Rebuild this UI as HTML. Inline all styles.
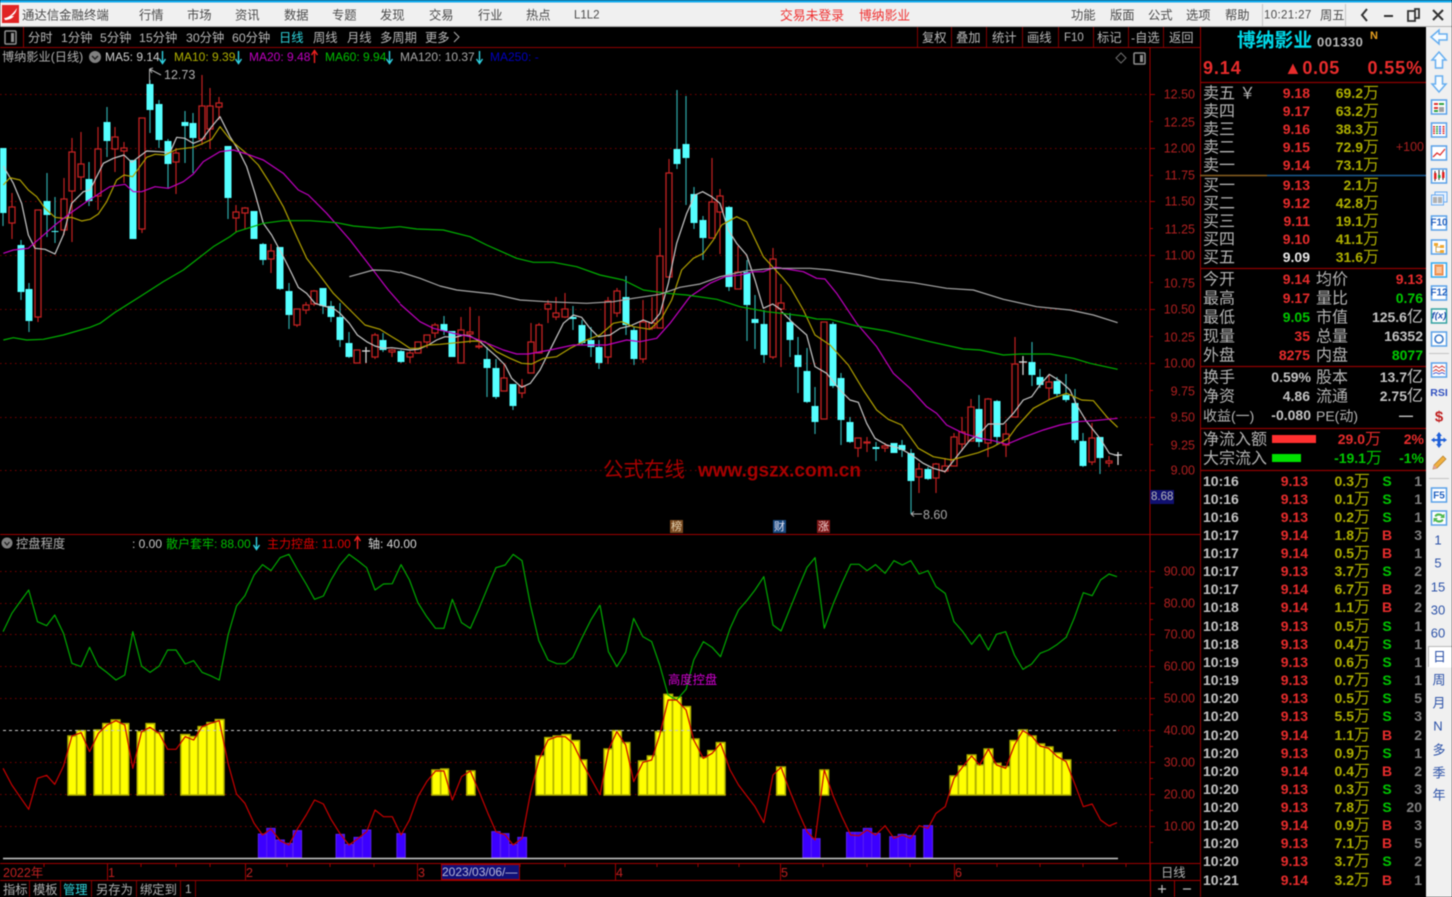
<!DOCTYPE html>
<html lang="zh">
<head>
<meta charset="utf-8">
<title>通达信金融终端</title>
<style>
html,body{margin:0;padding:0;background:#000;width:1452px;height:897px;overflow:hidden}
svg{display:block;filter:blur(.45px)}
text{font-family:"Liberation Sans","Noto Sans CJK SC",sans-serif;dominant-baseline:central;white-space:pre}
.m{font-size:12.3px;fill:#4a4a4a;transform:translateY(.6px)}
.tb{font-size:12.3px;fill:#b8b8b8;transform:translateY(1px)}
.ax{font-size:12.5px;fill:#b02020;text-anchor:end;transform:translateY(.6px)}
.lb{font-size:16px;fill:#b4b4b4;transform:translateY(1px)}
.n{font-size:14px;font-weight:700}
.r{fill:#e82c2c}.g{fill:#00c800}.y{fill:#b0b000}.w{fill:#c4c4c4}
.e{text-anchor:end}
.s{font-size:13px;fill:#2c52a8;text-anchor:middle}
.ma{fill:none;stroke-width:1.2;vector-effect:non-scaling-stroke;stroke-linejoin:round}
polyline,path.ns{vector-effect:non-scaling-stroke}
</style>
</head>
<body>
<svg width="1452" height="897" viewBox="0 0 1452 897" xmlns="http://www.w3.org/2000/svg">
<rect width="1452" height="897" fill="#000"/>

<!-- title bar -->
<rect width="1452" height="27" fill="#f0f0f0"/>
<rect width="1452" height="2.5" fill="#12a8ea"/>
<rect y="26" width="1452" height="1" fill="#b0b0b0"/>
<rect x="2" y="5" width="17" height="18" fill="#e02424"/>
<path d="M4 18C8 18 12 15 17 8C16 13 14 15 11 16L14 16C12 19 8 20 5 20Z" fill="#fff"/>
<text class="m" x="22" y="15" style="font-size:12.4px">通达信金融终端</text>
<text class="m" x="139" y="15">行情</text><text class="m" x="187" y="15">市场</text><text class="m" x="235" y="15">资讯</text><text class="m" x="284" y="15">数据</text><text class="m" x="332" y="15">专题</text><text class="m" x="380" y="15">发现</text><text class="m" x="429" y="15">交易</text><text class="m" x="478" y="15">行业</text><text class="m" x="526" y="15">热点</text><text class="m" x="574" y="15" style="font-size:11.5px">L1L2</text>
<text class="m" x="780" y="15" style="fill:#f03030;font-size:12.8px">交易未登录</text><text class="m" x="859" y="15" style="fill:#f03030;font-size:12.8px">博纳影业</text>
<text class="m" x="1071" y="15">功能</text><text class="m" x="1110" y="15">版面</text><text class="m" x="1148" y="15">公式</text><text class="m" x="1186" y="15">选项</text><text class="m" x="1225" y="15">帮助</text>
<path d="M1262.5 4V26M1345.5 4V26" stroke="#c4c4c4"/>
<text class="m" x="1264" y="15" style="font-size:11.5px;letter-spacing:.35px">10:21:27</text><text class="m" x="1320" y="15">周五</text>
<path d="M1367 9L1362 15L1367 21" fill="none" stroke="#333" stroke-width="2"/>
<path d="M1384 16H1393" stroke="#333" stroke-width="2"/>
<path d="M1408 11H1415V9H1419V18H1415M1408 11H1415V21H1408Z" fill="none" stroke="#333" stroke-width="1.8"/>
<path d="M1433 10L1443 20M1443 10L1433 20" stroke="#333" stroke-width="2"/>

<!-- toolbar -->
<rect x="5" y="31" width="11" height="13" rx="1" fill="none" stroke="#909090" stroke-width="1.5"/>
<rect x="11" y="33" width="3" height="9" fill="#909090"/>
<path d="M23.5 27V47" stroke="#900000"/>
<text class="tb" x="28" y="37">分时</text><text class="tb" x="61" y="37">1分钟</text><text class="tb" x="100" y="37">5分钟</text><text class="tb" x="139" y="37">15分钟</text><text class="tb" x="186" y="37">30分钟</text><text class="tb" x="232" y="37">60分钟</text><text class="tb" x="279" y="37" style="fill:#30d8e0">日线</text><text class="tb" x="313" y="37">周线</text><text class="tb" x="347" y="37">月线</text><text class="tb" x="380" y="37">多周期</text><text class="tb" x="425" y="37">更多</text>
<path d="M454 32L459 37L454 42" fill="none" stroke="#b0b0b0"/>
<path d="M917.5 27V47M951.5 27V47M986.5 27V47M1022.5 27V47M1058.5 27V47M1093.5 27V47M1128.5 27V47M1163.5 27V47" stroke="#800000"/>
<text class="tb" x="922" y="37">复权</text><text class="tb" x="956" y="37">叠加</text><text class="tb" x="992" y="37">统计</text><text class="tb" x="1027" y="37">画线</text><text class="tb" x="1064" y="37" style="font-size:11.5px">F10</text><text class="tb" x="1097" y="37">标记</text><text class="tb" x="1131" y="37">-自选</text><text class="tb" x="1169" y="37">返回</text>
<path d="M0 47.5H1200" stroke="#900000"/>

<!-- frame lines -->
<path d="M1150 47V880M0 534.5H1200M0 863.5H1200M0 880.5H1200M1200.5 27V897" stroke="#a00000" fill="none"/>

<!-- chart legend -->
<text x="2" y="57" style="font-size:12.2px;fill:#b0b0b0">博纳影业(日线)</text>
<circle cx="95" cy="57" r="6" fill="#808080"/><path d="M92 56L95 59L98 56" fill="none" stroke="#222" stroke-width="1.5"/>
<text x="105" y="57" style="font-size:12px;fill:#d0d0d0">MA5: 9.14</text>
<text x="174" y="57" style="font-size:12px;fill:#b0b000">MA10: 9.39</text>
<text x="249" y="57" style="font-size:12px;fill:#c000c0">MA20: 9.48</text>
<text x="325" y="57" style="font-size:12px;fill:#00c000">MA60: 9.94</text>
<text x="400" y="57" style="font-size:12px;fill:#a8a8a8">MA120: 10.37</text>
<text x="490" y="57" style="font-size:12px;fill:#0000c0">MA250: -</text>
<path d="M162.5 51V63M159.5 59L162.5 63.500L165.500 59M238.500 51V63M235.500 59L238.500 63.500L241.500 59M389.500 51V63M386.500 59L389.500 63.500L392.500 59M479.500 51V63M476.500 59L479.500 63.500L482.500 59" stroke="#30d0e0" stroke-width="1.400" fill="none"/>
<path d="M314.500 63V51M311.500 55L314.500 50.500L317.500 55" stroke="#f02020" stroke-width="1.400" fill="none"/>
<path d="M1121 53L1126 58L1121 63L1116 58Z" fill="none" stroke="#707070"/>
<rect x="1134" y="53" width="11" height="11" rx="1" fill="none" stroke="#909090" stroke-width="1.500"/><rect x="1140" y="55" width="3" height="7" fill="#909090"/>

<!-- upper grid -->
<path d="M0 94.500H1150M0 148.500H1150M0 201.500H1150M0 255.500H1150M0 309.500H1150M0 363.500H1150M0 417.500H1150M0 470.500H1150" stroke="#7a0000" stroke-dasharray="1.500 3.500"/>

<!-- axis ticks -->
<path d="M1150 94.500h5M1150 148.500h5M1150 201.500h5M1150 255.500h5M1150 309.500h5M1150 363.500h5M1150 417.500h5M1150 470.500h5M1150 121.500h3M1150 175.500h3M1150 228.500h3M1150 282.500h3M1150 336.500h3M1150 390.500h3M1150 444.500h3M1150 571.500h5M1150 603.500h5M1150 634.500h5M1150 666.500h5M1150 698.500h5M1150 730.500h5M1150 762.500h5M1150 794.500h5M1150 826.500h5M1150 587.500h3M1150 619.500h3M1150 650.500h3M1150 682.500h3M1150 714.500h3M1150 746.500h3M1150 778.500h3M1150 810.500h3M1150 842.500h3" stroke="#a00000"/>
<text class="ax" x="1195" y="94">12.50</text><text class="ax" x="1195" y="122">12.25</text><text class="ax" x="1195" y="148">12.00</text><text class="ax" x="1195" y="175">11.75</text><text class="ax" x="1195" y="201">11.50</text><text class="ax" x="1195" y="229">11.25</text><text class="ax" x="1195" y="255">11.00</text><text class="ax" x="1195" y="283">10.75</text><text class="ax" x="1195" y="309">10.50</text><text class="ax" x="1195" y="337">10.25</text><text class="ax" x="1195" y="363">10.00</text><text class="ax" x="1195" y="391">9.75</text><text class="ax" x="1195" y="417">9.50</text><text class="ax" x="1195" y="445">9.25</text><text class="ax" x="1195" y="470">9.00</text>
<rect x="1150" y="490" width="24" height="14" fill="#101070"/><text x="1151" y="497" style="font-size:11.500px;fill:#b8b8b8">8.68</text>
<text class="ax" x="1195" y="571">90.00</text><text class="ax" x="1195" y="603">80.00</text><text class="ax" x="1195" y="634">70.00</text><text class="ax" x="1195" y="666">60.00</text><text class="ax" x="1195" y="698">50.00</text><text class="ax" x="1195" y="730">40.00</text><text class="ax" x="1195" y="762">30.00</text><text class="ax" x="1195" y="794">20.00</text><text class="ax" x="1195" y="826">10.00</text>

<!-- watermark -->
<text x="603" y="470" style="font-size:20.500px;fill:#a80000">公式在线</text>
<text x="698" y="471" style="font-size:19px;font-weight:700;fill:#a80000">www.gszx.com.cn</text>

<!-- cyan wicks -->
<path stroke="#2fa8a8" stroke-width="1.200" fill="none" d="M3 148V226M21 240V300M29 283V332M47 173V237M55 197V243M89 162V206M107 107V157M150 80V133M159 100V148M168 139V188M185 111V163M193 113V173M228 146V219M263 243V265M280 247V290M289 283V329M323 288V314M331 301V322M340 303V347M349 332V358M383 333V352M401 350V363M444 316V335M487 347V397M496 359V399M513 384V410M573 306V330M582 320V345M591 327V357M599 340V369M626 276V335M634 327V365M677 90V169M686 96V205M694 187V229M703 216V260M729 206V291M747 260V341M755 295V349M764 310V363M790 313V357M798 337V393M807 348V403M815 387V434M833 322V388M841 373V445M850 417V443M876 442V461M902 440V457M911 449V514M928 467V480M979 395V447M997 400V445M1032 342V386M1040 369V388M1057 377V397M1066 374V402M1075 389V443M1083 433V467M1100 437V474"/>
<!-- cyan bodies -->
<path fill="#55ffff" d="M-.5 148H6.500V213H-.5ZM17.500 245H24.500V292H17.500ZM25.500 289H32.500V321H25.500ZM43.500 201H50.500V215H43.500ZM51.500 231H58.500V232H51.500ZM85.500 179H92.500V201H85.500ZM103.500 122H110.500V141H103.500ZM129.500 160H136.500V239H129.500ZM146.500 84H153.500V110H146.500ZM155.500 104H162.500V140H155.500ZM164.500 141H171.500V164H164.500ZM181.500 122H188.500V126H181.500ZM189.500 123H196.500V138H189.500ZM224.500 146H231.500V198H224.500ZM250.500 211H257.500V239H250.500ZM259.500 244H266.500V260H259.500ZM276.500 247H283.500V289H276.500ZM285.500 291H292.500V315H285.500ZM319.500 288H326.500V306H319.500ZM327.500 306H334.500V317H327.500ZM336.500 317H343.500V340H336.500ZM345.500 343H352.500V357H345.500ZM379.500 340H386.500V350H379.500ZM397.500 351H404.500V362H397.500ZM440.500 324H447.500V331H440.500ZM448.500 331H455.500V357H448.500ZM483.500 359H490.500V368H483.500ZM492.500 368H499.500V397H492.500ZM509.500 384H516.500V406H509.500ZM569.500 317H576.500V319H569.500ZM578.500 325H585.500V343H578.500ZM587.500 340H594.500V347H587.500ZM595.500 347H602.500V363H595.500ZM622.500 297H629.500V325H622.500ZM630.500 330H637.500V359H630.500ZM673.500 149H680.500V164H673.500ZM682.500 144H689.500V158H682.500ZM690.500 194H697.500V223H690.500ZM699.500 220H706.500V238H699.500ZM725.500 207H732.500V287H725.500ZM743.500 272H750.500V305H743.500ZM751.500 319H758.500V323H751.500ZM760.500 324H767.500V355H760.500ZM786.500 322H793.500V340H786.500ZM794.500 355H801.500V367H794.500ZM803.500 371H810.500V402H803.500ZM811.500 406H818.500V422H811.500ZM829.500 324H836.500V386H829.500ZM837.500 378H844.500V420H837.500ZM846.500 422H853.500V442H846.500ZM872.500 447H879.500V449H872.500ZM890.500 443H897.500V453H890.500ZM898.500 445H905.500V450H898.500ZM907.500 453H914.500V481H907.500ZM924.500 469H931.500V479H924.500ZM975.500 409H982.500V442H975.500ZM993.500 401H1000.500V437H993.500ZM1028.500 362H1035.500V375H1028.500ZM1036.500 377H1043.500V385H1036.500ZM1053.500 381H1060.500V394H1053.500ZM1062.500 395H1069.500V400H1062.500ZM1071.500 403H1078.500V440H1071.500ZM1079.500 441H1086.500V466H1079.500ZM1096.500 437H1103.500V458H1096.500Z"/>
<!-- red wicks -->
<path stroke="#c02020" stroke-width="1.200" fill="none" d="M12 193V239M38 210V322M64 178V235M72 138V242M81 132V190M98 127V210M115 127V172M124 142V183M142 118V233M176 148V194M202 75V145M210 88V149M219 97V120M236 205V232M245 207V229M271 244V273M297 309V327M306 302V314M314 290V306M357 350V363M375 333V359M392 349V357M410 351V363M418 342V353M427 335V348M435 323V338M461 317V363M470 307V343M479 316V349M504 363V391M522 379V398M531 323V373M539 323V353M548 300V323M556 297V320M565 293V318M608 297V364M617 288V317M643 300V363M652 297V330M660 228V328M669 159V277M712 158V238M720 189V254M738 246V289M773 248V359M781 284V367M824 322V419M858 438V457M867 437V452M885 443V452M919 463V493M936 463V493M945 458V473M954 433V466M962 417V451M971 399V441M988 398V457M1006 423V457M1015 337V417M1049 375V400M1092 423V465M1109 456V467"/>
<!-- red bodies -->
<path fill="#000" stroke="#c42222" stroke-width="1.300" d="M9 207H15V223H9ZM35 210H41V317H35ZM61 199H67V230H61ZM69 152H75V191H69ZM78 164H84V177H78ZM95 149H101V196H95ZM112 137H118V149H112ZM121 148H127V151H121ZM139 118H145V229H139ZM173 153H179V162H173ZM199 106H205V139H199ZM207 106H213V129H207ZM216 103H222V107H216ZM233 212H239V218H233ZM242 208H248V213H242ZM268 251H274V259H268ZM294 309H300V325H294ZM303 305H309V310H303ZM311 291H317V304H311ZM354 350H360V363H354ZM372 335H378V357H372ZM389 350H395V352H389ZM407 353H413V357H407ZM415 342H421V353H415ZM424 335H430V342H424ZM432 325H438V333H432ZM458 330H464V363H458ZM467 332H473V334H467ZM476 346H482V347H476ZM501 378H507V391H501ZM519 386H525V393H519ZM528 342H534V373H528ZM536 325H542V353H536ZM545 304H551V309H545ZM553 313H559V317H553ZM562 309H568V317H562ZM605 301H611V357H605ZM614 291H620V313H614ZM640 322H646V359H640ZM649 323H655V328H649ZM657 256H663V328H657ZM666 173H672V277H666ZM709 202H715V238H709ZM717 196H723V212H717ZM735 272H741V289H735ZM770 259H776V357H770ZM778 303H784V309H778ZM821 322H827V419H821ZM855 438H861V448H855ZM864 442H870V443H864ZM882 446H888V448H882ZM916 469H922V477H916ZM933 464H939V478H933ZM942 466H948V471H942ZM951 437H957V466H951ZM959 432H965V444H959ZM968 407H974V441H968ZM985 399H991V443H985ZM1003 434H1009V445H1003ZM1012 364H1018V417H1012ZM1046 382H1052V388H1046ZM1089 438H1095V462H1089ZM1106 461H1112V463H1106Z"/>
<!-- white dojis -->
<path stroke="#e0e0e0" stroke-width="1.200" fill="none" d="M366 347V363M362 351H370M1023 356V375M1019 362H1027M1118 452V465M1114 455H1122"/>

<!-- high / low marks -->
<path d="M149.500 84V69M149.500 69L161 75M149.500 69L153 68M149.500 69L152 73" stroke="#b0b0b0" fill="none"/>
<text x="164" y="75" style="font-size:12.500px;fill:#b0b0b0">12.73</text>
<path d="M911 514H922M911 514L914 511.500M911 514L914 516.500" stroke="#b0b0b0" fill="none"/>
<text x="923" y="515" style="font-size:12.500px;fill:#a8a8a8">8.60</text>

<!-- MA lines -->
<g transform="translate(0,80) scale(.33333)">
<polyline class="ma" stroke="#c8c8c8" points="10,258 40,310 65,370 85,465 105,505 135,508 165,522 190,465 215,370 250,335 270,330 310,250 340,235 372,225 395,247 440,213 480,215 510,218 530,172 555,175 580,190 605,180 635,140 660,110 690,170 715,210 740,260 765,340 790,430 815,465 850,530 875,580 895,622 920,640 945,670 970,678 1000,685 1020,700 1048,730 1072,765 1100,785 1125,798 1150,805 1175,803 1200,806"/>
<polyline class="ma" stroke="#b0a000" points="10,315 30,293 60,300 85,330 110,350 135,385 165,412 190,415 215,412 245,423 270,418 295,402 320,365 350,300 372,285 398,290 440,232 465,223 495,225 530,208 580,202 605,192 635,178 660,140 690,178 715,200 745,225 775,255 810,310 850,380 890,470 920,535 955,580 1000,640 1050,690 1095,735 1140,748 1175,770 1200,785"/>
<polyline class="ma" stroke="#c000c0" points="10,520 40,510 85,505 125,470 165,435 210,400 260,365 330,320 375,313 400,335 425,335 465,320 505,325 550,305 580,282 610,245 660,215 700,210 740,222 790,240 850,280 895,330 925,345 980,400 1050,480 1100,545 1165,630 1200,670"/>
<polyline class="ma" stroke="#00b000" points="10,780 40,773 80,780 130,778 190,765 270,742 300,730 345,697 420,650 490,605 550,570 640,500 690,470 710,455 790,430 850,422 930,422 1010,428 1060,438 1140,445 1200,440"/>
<polyline class="ma" stroke="#a8a8a8" points="1048,590 1120,570 1170,572 1200,578"/>
</g>
<g transform="translate(400,80) scale(.33333)">
<polyline class="ma" stroke="#c8c8c8" points="0,806 30,810 55,808 85,795 110,780 135,770 165,772 190,765 210,768 240,785 265,808 290,830 315,855 335,895 365,922 391,910 420,870 460,790 490,730 520,705 545,712 570,745 595,770 630,765 660,745 690,738 730,720 755,730 780,700 805,610 830,490 860,400 885,345 908,335 935,350 960,370 985,450 1010,490 1040,525 1065,600 1090,685 1118,672 1145,690"/>
<polyline class="ma" stroke="#b0a000" points="0,785 30,805 55,805 85,795 120,793 170,788 220,783 255,785 290,815 330,835 365,850 395,852 430,835 470,830 510,805 560,780 600,765 640,730 665,725 700,740 750,748 785,715 815,660 845,570 880,535 910,520 940,480 965,435 1010,410 1040,425 1090,530 1145,590"/>
<polyline class="ma" stroke="#c000c0" points="0,672 60,725 100,745 160,760 210,770 250,785 310,810 350,822 385,822 450,810 520,795 570,795 620,795 680,780 720,785 770,775 810,730 870,650 930,610 975,590 1020,585 1060,575 1090,575 1125,562 1145,564"/>
<polyline class="ma" stroke="#00b000" points="0,440 50,447 130,450 210,470 260,495 350,535 400,547 460,547 530,560 600,585 670,600 730,630 800,640 860,645 950,658 1020,680 1100,695 1145,700"/>
<polyline class="ma" stroke="#a8a8a8" points="0,576 60,595 120,618 170,630 280,642 360,660 440,665 560,670 640,665 700,655 780,643 840,622 900,612 960,590 1040,572 1120,565 1145,565"/>
</g>
<g transform="translate(760,200) scale(.33333)">
<polyline class="ma" stroke="#c8c8c8" points="65,335 100,370 140,405 165,500 200,520 240,570 270,600 295,607 320,670 345,715 380,735 420,745 455,765 490,790 520,805 555,815 590,770 630,720 660,700 685,672 730,672 760,640 790,600 815,590 840,555 868,523 900,543 930,570 950,615 980,665 1020,715 1048,760 1073,767"/>
<polyline class="ma" stroke="#b0a000" points="65,230 90,260 130,330 165,405 210,435 265,495 310,570 350,630 385,658 425,675 475,745 520,770 575,780 610,770 655,758 700,740 745,715 770,680 820,625 870,598 920,580 965,600 1000,602 1040,650 1073,682"/>
<polyline class="ma" stroke="#c000c0" points="65,206 80,207 130,215 170,235 195,237 230,280 290,370 350,440 400,520 450,565 500,620 530,640 560,675 610,700 660,715 700,722 740,733 790,712 850,690 900,675 950,665 1000,662 1073,655"/>
<polyline class="ma" stroke="#00b000" points="65,340 130,348 170,357 210,358 290,378 380,393 510,425 610,447 660,450 730,465 780,462 870,462 940,475 990,490 1073,508"/>
<polyline class="ma" stroke="#a8a8a8" points="65,205 150,205 210,210 300,225 360,238 460,248 560,265 640,270 730,298 830,320 930,330 1000,345 1073,368"/>
</g>

<!-- event markers -->
<rect x="670" y="520" width="13" height="13" fill="#7a4a20"/><text x="676.500" y="527" text-anchor="middle" style="font-size:11px;fill:#e0d0b0">榜</text>
<rect x="773" y="520" width="13" height="13" fill="#1a4a80"/><text x="779.500" y="527" text-anchor="middle" style="font-size:11px;fill:#e0e0f0">财</text>
<rect x="817" y="520" width="13" height="13" fill="#801818"/><text x="823.500" y="527" text-anchor="middle" style="font-size:11px;fill:#f0d0d0">涨</text>

<!-- lower legend -->
<circle cx="7" cy="543" r="5.500" fill="#808080"/><path d="M4.500 542L7 545L9.500 542" fill="none" stroke="#222" stroke-width="1.300"/>
<text x="16" y="544" style="font-size:12.300px;fill:#b0b0b0">控盘程度</text>
<text x="132" y="544" style="font-size:12px;fill:#c8c8c8">: 0.00</text>
<text x="166" y="544" style="font-size:12px;fill:#00c000">散户套牢: 88.00</text>
<path d="M256.500 537V549M253.500 545L256.500 549.500L259.500 545" stroke="#30d0e0" stroke-width="1.400" fill="none"/>
<text x="267" y="544" style="font-size:12px;fill:#e00000">主力控盘: 11.00</text>
<path d="M357.500 549V537M354.500 541L357.500 536.500L360.500 541" stroke="#f02020" stroke-width="1.400" fill="none"/>
<text x="368" y="544" style="font-size:12px;fill:#d8d8d8">轴: 40.00</text>

<!-- lower grid -->
<path d="M0 571.500H1150M0 603.500H1150M0 634.500H1150M0 666.500H1150M0 698.500H1150M0 762.500H1150M0 794.500H1150M0 826.500H1150" stroke="#7a0000" stroke-dasharray="1.500 3.500"/>
<path d="M1118 730.500H1150" stroke="#7a0000" stroke-dasharray="1.500 3.500"/>

<!-- bars -->
<g transform="translate(0,530) scale(.38270,.33333)">
<path class="ns" fill="#ffff00" stroke="#b0b000" stroke-width="1.500" d="M177.700 795V618H200.300V795ZM200.300 795V602H222.900V795ZM245.700 795V600H268.300V795ZM268.700 795V581H291.300V795ZM290.700 795V570H313.300V795ZM313.700 795V581H336.300V795ZM358.700 795V605H381.300V795ZM381.700 795V581H404.300V795ZM404.700 795V608H427.300V795ZM472.700 795V614H495.300V795ZM494.700 795V620H517.300V795ZM517.700 795V590H540.300V795ZM540.700 795V578H563.300V795ZM562.700 795V569H585.300V795ZM1128.700 795V720H1151.300V795ZM1151.700 795V717H1172V795ZM1219.700 795V723H1241V795ZM1400.700 795V678H1423.300V795ZM1423.700 795V623H1446.300V795ZM1445.700 795V618H1468.300V795ZM1468.700 795V614H1491.300V795ZM1491.700 795V632H1514.300V795ZM1514.700 795V690H1533V795Z"/>
<path class="ns" fill="#3c00ff" stroke="#5a20f0" stroke-width="1" d="M675 983V912H697V983ZM697 983V895H719V983ZM721 983V930H743V983ZM743 983V940H765V983ZM766 983V902H788V983ZM878 983V913H900V983ZM901 983V943H923V983ZM925 983V922H947V983ZM947 983V900H969V983ZM1037 983V911H1059V983ZM1285 983V905H1307V983ZM1308 983V911H1330V983ZM1330 983V943H1352V983ZM1353 983V922H1376V983Z"/>
</g>
<g transform="translate(600,530) scale(.38270,.33333)">
<path class="ns" fill="#ffff00" stroke="#b0b000" stroke-width="1.500" d="M10.700 795V657H33.300V795ZM33 795V602H55.600V795ZM55.700 795V638H78V795ZM100.700 795V693H123.300V795ZM123.700 795V678H146.300V795ZM145 795V605H167.600V795ZM167 795V493H189.600V795ZM189 795V502H212V795ZM213.700 795V530H236.300V795ZM236 795V627H258.600V795ZM258.700 795V682H281.300V795ZM281.700 795V662H304.300V795ZM304 795V638H326.600V795ZM461.700 795V711H484.300V795ZM574.700 795V720H597.300V795ZM914.700 795V738H936.300V795ZM936.700 795V708H959.300V795ZM959.700 795V675H982.300V795ZM981 795V705H1003.600V795ZM1003.700 795V657H1026.300V795ZM1025 795V700H1047.600V795ZM1048.700 795V710H1071.300V795ZM1071.700 795V632H1094.300V795ZM1094 795V600H1116.600V795ZM1116.700 795V618H1139.300V795ZM1139 795V642H1161.600V795ZM1161 795V651H1183.600V795ZM1184 795V669H1206.600V795ZM1207 795V690H1230V795Z"/>
<path class="ns" fill="#3c00ff" stroke="#5a20f0" stroke-width="1" d="M530 983V898H552V983ZM552 983V926H575V983ZM644 983V907H666V983ZM666 983V907H688V983ZM688 983V895H710V983ZM710 983V910H732V983ZM757 983V920H779V983ZM779 983V913H801V983ZM801 983V917H824V983ZM846 983V887H869V983Z"/>
</g>

<!-- white lines -->
<path d="M3 730.500H1118" stroke="#c8c8c8" stroke-dasharray="3 3"/>
<path d="M3 858.500H1118" stroke="#c8c8c8" stroke-width="1.500"/>

<!-- indicator lines -->
<g transform="translate(0,530) scale(.38270,.33333)">
<polyline class="ma" stroke="#00a800" points="8,305 31,250 52,216 75,180 98,275 122,287 143,255 166,310 188,400 212,410 234,352 257,408 280,428 303,450 326,435 347,305 370,408 392,427 416,408 438,360 460,360 484,402 506,392 528,427 550,437 573,450 596,315 618,228 640,197 664,135 686,104 708,122 732,83 755,73 778,120 800,162 822,208 845,198 865,150 888,105 912,73 936,93 958,113 980,180 1002,162 1025,161 1048,104 1070,150 1092,218 1115,260 1138,295 1160,295 1182,208 1206,278 1229,295 1252,235 1275,170 1296,113 1320,105 1341,73 1364,92 1386,225 1408,332 1432,390 1455,401 1477,401 1497,382 1520,325 1544,270 1568,225"/>
<polyline class="ma" stroke="#c80000" points="8,715 31,765 52,800 75,838 98,745 122,736 143,763 166,708 188,618 212,608 234,665 257,610 280,585 303,572 326,585 347,715 370,605 392,592 416,610 438,658 460,658 484,620 506,630 528,590 550,580 573,572 596,700 618,792 640,820 664,880 686,915 708,897 732,932 755,945 778,895 800,855 822,810 845,822 865,868 888,910 912,945 936,925 958,905 980,840 1002,860 1025,860 1048,915 1070,870 1092,800 1115,755 1138,723 1160,723 1182,810 1206,740 1229,723 1252,785 1275,850 1296,905 1320,915 1341,945 1364,925 1386,790 1408,690 1432,630 1455,620 1477,620 1497,640 1520,695 1544,745 1568,795"/>
</g>
<g transform="translate(600,530) scale(.38270,.33333)">
<polyline class="ma" stroke="#00a800" points="0,225 22,365 44,410 67,367 88,265 112,320 135,335 156,405 178,495 200,510 225,478 245,390 270,335 293,352 315,380 340,295 362,240 385,210 405,180 428,140 452,285 473,303 495,240 518,175 541,112 562,83 586,295 610,220 632,160 655,103 677,103 698,122 720,104 745,130 768,92 790,105 812,92 834,132 857,122 878,170 902,190 925,275 948,305 971,343 992,313 1015,360 1036,313 1060,305 1083,375 1105,418 1128,402 1150,370 1172,360 1195,343 1218,322 1240,262 1263,188 1286,197 1308,150 1330,132 1351,140"/>
<polyline class="ma" stroke="#c80000" points="0,795 22,660 44,605 67,645 88,755 112,697 135,690 156,615 178,510 200,510 225,540 245,630 270,685 293,670 315,640 340,720 362,765 385,800 405,830 428,878 452,735 473,712 495,780 518,845 541,905 562,930 586,720 610,800 632,860 655,915 677,917 698,900 720,915 745,887 768,925 790,915 812,925 834,887 857,895 878,850 902,830 925,745 948,710 971,678 992,705 1015,657 1036,705 1060,715 1083,645 1105,602 1128,618 1150,648 1172,655 1195,680 1218,695 1240,760 1263,830 1286,822 1308,870 1330,888 1351,878"/>
</g>
<text x="668" y="680" style="font-size:12.300px;fill:#d000d0">高度控盘</text>

<!-- date row -->
<path d="M107.500 864V880M245.500 864V880M417.500 864V880M615.500 864V880M780.500 864V880M954.500 864V880M1174.500 880V897M1150.500 864V897" stroke="#a00000"/>
<path d="M44 864v3M141 864v3M176 864v3M210 864v3M287 864v3M330 864v3M374 864v3M520 864v3M565 864v3M657 864v3M698 864v3M739 864v3M823 864v3M867 864v3M910 864v3M997 864v3M1040 864v3M1083 864v3M1126 864v3" stroke="#a00000"/>
<text x="3" y="873" style="font-size:12.500px;fill:#c02020">2022年</text>
<text x="108" y="873" style="font-size:12.500px;fill:#c02020">1</text>
<text x="246" y="873" style="font-size:12.500px;fill:#c02020">2</text>
<text x="418" y="873" style="font-size:12.500px;fill:#c02020">3</text>
<rect x="441.500" y="864.500" width="78" height="15" fill="#101078" stroke="#a00000"/>
<text x="442" y="872" style="font-size:12px;fill:#b8b8d8">2023/03/06/—</text>
<text x="616" y="873" style="font-size:12.500px;fill:#c02020">4</text>
<text x="781" y="873" style="font-size:12.500px;fill:#c02020">5</text>
<text x="955" y="873" style="font-size:12.500px;fill:#c02020">6</text>
<text x="1161" y="873" style="font-size:12.300px;fill:#b0b0b0">日线</text>

<!-- bottom row -->
<path d="M29.500 881V897M60.500 881V897M91.500 881V897M136.500 881V897M180.500 881V897M195.500 881V897" stroke="#800000"/>
<text x="3" y="890" style="font-size:12.300px;fill:#b0b0b0">指标</text>
<text x="33" y="890" style="font-size:12.300px;fill:#b0b0b0">模板</text>
<text x="63" y="890" style="font-size:12.300px;fill:#30d8e0">管理</text>
<text x="96" y="890" style="font-size:12.300px;fill:#b0b0b0">另存为</text>
<text x="140" y="890" style="font-size:12.300px;fill:#b0b0b0">绑定到</text>
<text x="185" y="889" style="font-size:12px;fill:#b0b0b0">1</text>
<path d="M1158 889H1166M1162 885V893M1183 889H1191" stroke="#c0c0c0" stroke-width="1.200"/>

<!-- right panel -->
<path d="M1200 82.500H1426M1200 268.500H1426M1200 366.500H1426M1200 428.500H1426M1200 470.500H1426" stroke="#900000" stroke-width="1.200"/>
<path d="M1200 175.500H1267" stroke="#8a6020" stroke-width="1.400"/><path d="M1267 175.500H1426" stroke="#1a5a90" stroke-width="1.400"/>
<path d="M1200.500 470V897" stroke="#900000"/>
<text x="1237" y="40" style="font-size:18.800px;fill:#00d8e8;font-weight:700">博纳影业</text>
<text x="1317" y="42" style="font-size:13px;fill:#b8b8b8;letter-spacing:.5px;font-weight:700">001330</text>
<text x="1370" y="36" style="font-size:11px;fill:#e8a020;font-weight:700">N</text>
<text class="r" x="1203" y="68" style="font-size:18px;font-weight:700;letter-spacing:.9px">9.14</text>
<text class="r" x="1284" y="68" style="font-size:18px;font-weight:700;letter-spacing:.6px">▲0.05</text>
<text class="r e" x="1423" y="68" style="font-size:18px;font-weight:700;letter-spacing:.9px">0.55%</text>

<text class="lb" x="1203" y="93">卖五 ￥</text><text class="lb" x="1203" y="111">卖四</text><text class="lb" x="1203" y="129">卖三</text><text class="lb" x="1203" y="147">卖二</text><text class="lb" x="1203" y="165">卖一</text>
<text class="lb" x="1203" y="185">买一</text><text class="lb" x="1203" y="203">买二</text><text class="lb" x="1203" y="221">买三</text><text class="lb" x="1203" y="239">买四</text><text class="lb" x="1203" y="257">买五</text>
<g class="n r e">
<text x="1310" y="93">9.18</text><text x="1310" y="111">9.17</text><text x="1310" y="129">9.16</text><text x="1310" y="147">9.15</text><text x="1310" y="165">9.14</text><text x="1310" y="185">9.13</text><text x="1310" y="203">9.12</text><text x="1310" y="221">9.11</text><text x="1310" y="239">9.10</text><text x="1310" y="257" style="fill:#e8e8e8">9.09</text>
</g>
<g class="n y e">
<text x="1379" y="93">69.2<tspan font-weight="400" font-size="16">万</tspan></text><text x="1379" y="111">63.2<tspan font-weight="400" font-size="16">万</tspan></text><text x="1379" y="129">38.3<tspan font-weight="400" font-size="16">万</tspan></text><text x="1379" y="147">72.9<tspan font-weight="400" font-size="16">万</tspan></text><text x="1379" y="165">73.1<tspan font-weight="400" font-size="16">万</tspan></text><text x="1379" y="185">2.1<tspan font-weight="400" font-size="16">万</tspan></text><text x="1379" y="203">42.8<tspan font-weight="400" font-size="16">万</tspan></text><text x="1379" y="221">19.1<tspan font-weight="400" font-size="16">万</tspan></text><text x="1379" y="239">41.1<tspan font-weight="400" font-size="16">万</tspan></text><text x="1379" y="257">31.6<tspan font-weight="400" font-size="16">万</tspan></text>
</g>
<text x="1424" y="147" text-anchor="end" style="font-size:12.500px;fill:#a82020">+100</text>

<text class="lb" x="1203" y="279">今开</text><text class="lb" x="1316" y="279">均价</text>
<text class="lb" x="1203" y="298">最高</text><text class="lb" x="1316" y="298">量比</text>
<text class="lb" x="1203" y="317">最低</text><text class="lb" x="1316" y="317">市值</text>
<text class="lb" x="1203" y="336">现量</text><text class="lb" x="1316" y="336">总量</text>
<text class="lb" x="1203" y="355">外盘</text><text class="lb" x="1316" y="355">内盘</text>
<text class="lb" x="1203" y="377">换手</text><text class="lb" x="1316" y="377">股本</text>
<text class="lb" x="1203" y="396">净资</text><text class="lb" x="1316" y="396">流通</text>
<text class="lb" x="1203" y="415" style="font-size:14px">收益(一)</text><text class="lb" x="1316" y="415" style="font-size:14px">PE(动)</text>
<g class="n e">
<text class="r" x="1310" y="279">9.14</text><text class="r" x="1423" y="279">9.13</text>
<text class="r" x="1310" y="298">9.17</text><text class="g" x="1423" y="298">0.76</text>
<text class="g" x="1310" y="317">9.05</text><text class="w" x="1423" y="317">125.6<tspan font-weight="400" font-size="16">亿</tspan></text>
<text class="r" x="1310" y="336">35</text><text class="w" x="1423" y="336">16352</text>
<text class="r" x="1310" y="355">8275</text><text class="g" x="1423" y="355">8077</text>
<text class="w" x="1311" y="377">0.59%</text><text class="w" x="1423" y="377">13.7<tspan font-weight="400" font-size="16">亿</tspan></text>
<text class="w" x="1310" y="396">4.86</text><text class="w" x="1423" y="396">2.75<tspan font-weight="400" font-size="16">亿</tspan></text>
<text class="w" x="1311" y="415">-0.080</text><text class="w" x="1413" y="415">—</text>
</g>
<text class="lb" x="1203" y="439">净流入额</text>
<rect x="1272" y="435" width="44" height="8" fill="#ff3030"/>
<text class="n r e" x="1381" y="439">29.0<tspan font-weight="400" font-size="16">万</tspan></text>
<text class="n r e" x="1424" y="439">2%</text>
<text class="lb" x="1203" y="458">大宗流入</text>
<rect x="1272" y="454" width="29" height="8" fill="#00e000"/>
<text class="n g e" x="1382" y="458">-19.1<tspan font-weight="400" font-size="16">万</tspan></text>
<text class="n g e" x="1424" y="458">-1%</text>

<!-- trades: time -->
<g class="n w" fill="#c4c4c4">
<text x="1203" y="481">10:16</text><text x="1203" y="499">10:16</text><text x="1203" y="517">10:16</text><text x="1203" y="535">10:17</text><text x="1203" y="553">10:17</text><text x="1203" y="571">10:17</text><text x="1203" y="589">10:17</text><text x="1203" y="607">10:18</text><text x="1203" y="626">10:18</text><text x="1203" y="644">10:18</text><text x="1203" y="662">10:19</text><text x="1203" y="680">10:19</text><text x="1203" y="698">10:20</text><text x="1203" y="716">10:20</text><text x="1203" y="735">10:20</text><text x="1203" y="753">10:20</text><text x="1203" y="771">10:20</text><text x="1203" y="789">10:20</text><text x="1203" y="807">10:20</text><text x="1203" y="825">10:20</text><text x="1203" y="843">10:20</text><text x="1203" y="861">10:20</text><text x="1203" y="880">10:21</text>
</g>
<g class="n r e">
<text x="1308" y="481">9.13</text><text x="1308" y="499">9.13</text><text x="1308" y="517">9.13</text><text x="1308" y="535">9.14</text><text x="1308" y="553">9.14</text><text x="1308" y="571">9.13</text><text x="1308" y="589">9.14</text><text x="1308" y="607">9.14</text><text x="1308" y="626">9.13</text><text x="1308" y="644">9.13</text><text x="1308" y="662">9.13</text><text x="1308" y="680">9.13</text><text x="1308" y="698">9.13</text><text x="1308" y="716">9.13</text><text x="1308" y="735">9.14</text><text x="1308" y="753">9.13</text><text x="1308" y="771">9.14</text><text x="1308" y="789">9.13</text><text x="1308" y="807">9.13</text><text x="1308" y="825">9.14</text><text x="1308" y="843">9.13</text><text x="1308" y="861">9.13</text><text x="1308" y="880">9.14</text>
</g>
<g class="n y e">
<text x="1370" y="481">0.3<tspan font-weight="400" font-size="16">万</tspan></text><text x="1370" y="499">0.1<tspan font-weight="400" font-size="16">万</tspan></text><text x="1370" y="517">0.2<tspan font-weight="400" font-size="16">万</tspan></text><text x="1370" y="535">1.8<tspan font-weight="400" font-size="16">万</tspan></text><text x="1370" y="553">0.5<tspan font-weight="400" font-size="16">万</tspan></text><text x="1370" y="571">3.7<tspan font-weight="400" font-size="16">万</tspan></text><text x="1370" y="589">6.7<tspan font-weight="400" font-size="16">万</tspan></text><text x="1370" y="607">1.1<tspan font-weight="400" font-size="16">万</tspan></text><text x="1370" y="626">0.5<tspan font-weight="400" font-size="16">万</tspan></text><text x="1370" y="644">0.4<tspan font-weight="400" font-size="16">万</tspan></text><text x="1370" y="662">0.6<tspan font-weight="400" font-size="16">万</tspan></text><text x="1370" y="680">0.7<tspan font-weight="400" font-size="16">万</tspan></text><text x="1370" y="698">0.5<tspan font-weight="400" font-size="16">万</tspan></text><text x="1370" y="716">5.5<tspan font-weight="400" font-size="16">万</tspan></text><text x="1370" y="735">1.1<tspan font-weight="400" font-size="16">万</tspan></text><text x="1370" y="753">0.9<tspan font-weight="400" font-size="16">万</tspan></text><text x="1370" y="771">0.4<tspan font-weight="400" font-size="16">万</tspan></text><text x="1370" y="789">0.3<tspan font-weight="400" font-size="16">万</tspan></text><text x="1370" y="807">7.8<tspan font-weight="400" font-size="16">万</tspan></text><text x="1370" y="825">0.9<tspan font-weight="400" font-size="16">万</tspan></text><text x="1370" y="843">7.1<tspan font-weight="400" font-size="16">万</tspan></text><text x="1370" y="861">3.7<tspan font-weight="400" font-size="16">万</tspan></text><text x="1370" y="880">3.2<tspan font-weight="400" font-size="16">万</tspan></text>
</g>
<g class="n" text-anchor="middle">
<text class="g" x="1387" y="481">S</text><text class="g" x="1387" y="499">S</text><text class="g" x="1387" y="517">S</text><text class="r" x="1387" y="535">B</text><text class="r" x="1387" y="553">B</text><text class="g" x="1387" y="571">S</text><text class="r" x="1387" y="589">B</text><text class="r" x="1387" y="607">B</text><text class="g" x="1387" y="626">S</text><text class="g" x="1387" y="644">S</text><text class="g" x="1387" y="662">S</text><text class="g" x="1387" y="680">S</text><text class="g" x="1387" y="698">S</text><text class="g" x="1387" y="716">S</text><text class="r" x="1387" y="735">B</text><text class="g" x="1387" y="753">S</text><text class="r" x="1387" y="771">B</text><text class="g" x="1387" y="789">S</text><text class="g" x="1387" y="807">S</text><text class="r" x="1387" y="825">B</text><text class="r" x="1387" y="843">B</text><text class="g" x="1387" y="861">S</text><text class="r" x="1387" y="880">B</text>
</g>
<g class="n e" style="fill:#808080">
<text x="1422" y="481">1</text><text x="1422" y="499">1</text><text x="1422" y="517">1</text><text x="1422" y="535">3</text><text x="1422" y="553">1</text><text x="1422" y="571">2</text><text x="1422" y="589">2</text><text x="1422" y="607">2</text><text x="1422" y="626">1</text><text x="1422" y="644">1</text><text x="1422" y="662">1</text><text x="1422" y="680">1</text><text x="1422" y="698">5</text><text x="1422" y="716">3</text><text x="1422" y="735">2</text><text x="1422" y="753">1</text><text x="1422" y="771">2</text><text x="1422" y="789">3</text><text x="1422" y="807">20</text><text x="1422" y="825">3</text><text x="1422" y="843">5</text><text x="1422" y="861">2</text><text x="1422" y="880">1</text>
</g>

<!-- sidebar -->
<rect x="1426" y="27" width="26" height="870" fill="#f0f0f0"/>
<g fill="#f6fbff" stroke="#66aef0" stroke-width="1.500">
<path d="M1431 37L1439 30V34H1447V40H1439V44Z"/>
<path d="M1439 52L1446 60H1442.500V68H1435.500V60H1432Z"/>
<path d="M1439 92L1446 84H1442.500V76H1435.500V84H1432Z"/>
</g>
<g fill="#fff" stroke="#58a0e8" stroke-width="1.500">
<rect x="1431.500" y="100" width="15" height="14"/><rect x="1431.500" y="123" width="15" height="14"/><rect x="1431.500" y="146" width="15" height="14"/><rect x="1431.500" y="169" width="15" height="14"/>
<rect x="1431.500" y="216" width="15" height="14"/><rect x="1431.500" y="240" width="15" height="14"/><rect x="1431.500" y="286" width="15" height="14"/><rect x="1431.500" y="309" width="15" height="14" stroke="#30a0a0"/><rect x="1431.500" y="332" width="15" height="14"/><rect x="1431.500" y="363" width="15" height="14"/><rect x="1431.500" y="488" width="15" height="14"/><rect x="1431.500" y="511" width="15" height="14"/>
<rect x="1431.500" y="263" width="15" height="14" stroke="#30a8f0"/>
</g>
<path d="M1434 103h4v2h-4zM1434 107h4v2h-4z" fill="#e03030"/><path d="M1439 103h5v2h-5zM1434 110h4v2h-4z" fill="#30a040"/><path d="M1439 107h5v5h-5z" fill="#a0a0a0"/>
<path d="M1434 126v8" stroke="#e03030" stroke-width="2" stroke-dasharray="1.500 .7"/><path d="M1437 126v8" stroke="#30a040" stroke-width="2" stroke-dasharray="1.500 .7"/><path d="M1440 126v8" stroke="#3050e0" stroke-width="2" stroke-dasharray="1.500 .7"/><path d="M1443.500 126v8" stroke="#e03030" stroke-width="2" stroke-dasharray="1.500 .7"/>
<path d="M1433 157L1437 153L1440 155L1445 149" fill="none" stroke="#e03030" stroke-width="1.300"/>
<path d="M1435 171v10M1439 170v10M1443 170v10" stroke="#333"/><path d="M1434 173h2.500v6h-2.500z" fill="#e02020"/><path d="M1438 175h2.500v3h-2.500z" fill="#20a040"/><path d="M1442 172h2.500v6h-2.500z" fill="#e02020"/>
<rect x="1435" y="192" width="12" height="10" fill="#e8f2ff" stroke="#6aaaf0"/><rect x="1431.500" y="195" width="12" height="10" fill="#e8f2ff" stroke="#6aaaf0"/><path d="M1433 197h4v6h-4zM1438 197h4v6h-4z" fill="#b0b0b0"/>
<text x="1439" y="223" text-anchor="middle" style="font-size:10px;fill:#2060c0;font-weight:700">F10</text>
<path d="M1434 243h4v3h-4zM1440 245h4v3h-4zM1440 250h4v3h-4z" fill="#f0a830"/><path d="M1436 246v6h4M1436 247h4" fill="none" stroke="#c09030" stroke-width=".8"/>
<rect x="1435" y="265" width="8" height="10" fill="#f4a060" stroke="#e07030" stroke-width=".8"/><path d="M1436.500 268h5M1436.500 270h5M1436.500 272h5" stroke="#fff" stroke-width=".8"/>
<text x="1439" y="293" text-anchor="middle" style="font-size:10px;fill:#2060c0;font-weight:700">F12</text>
<text x="1439" y="316" text-anchor="middle" style="font-size:9.500px;fill:#2050b0;font-weight:700;font-style:italic">f(x)</text>
<circle cx="1439" cy="339" r="4" fill="none" stroke="#3a78c8" stroke-width="1.600"/>
<path d="M1429 353.500H1449M1429 478.500H1449" stroke="#c4c4c4"/>
<path d="M1433 368L1436 366L1439 368L1442 366L1445 368M1433 371.500L1436 369.500L1439 371.500L1442 369.500L1445 371.500" fill="none" stroke="#d04040"/>
<path d="M1433 374L1436 372.500L1439 374L1442 372.500L1445 374" fill="none" stroke="#5060d0"/>
<text x="1439" y="393" text-anchor="middle" style="font-size:10.500px;fill:#3050c0;font-weight:700">RSI</text>
<text x="1439" y="417" text-anchor="middle" style="font-size:15px;fill:#c02020;font-weight:700">$</text>
<path d="M1439 432L1442 436H1440.500V439H1443.500V437.500L1447 440L1443.500 442.500V441H1440.500V444H1442L1439 448L1436 444H1437.500V441H1434.500V442.500L1431 440L1434.500 437.500V439H1437.500V436H1436Z" fill="#2060d8"/>
<path d="M1433 469L1434 465L1443 456L1446 459L1437 468Z" fill="#f0b040" stroke="#b07820" stroke-width=".7"/><path d="M1433 469L1434 465L1437 468Z" fill="#e0a0a0"/>
<text x="1439" y="496" text-anchor="middle" style="font-size:10px;fill:#2060c0;font-weight:700">F5</text>
<path d="M1434.500 516C1435.500 513 1440 512.500 1443 515L1444.500 513.500V518H1440L1441.500 516.500C1439.500 515 1437 515.500 1436 517Z" fill="#50b850"/>
<path d="M1443.500 520C1442.500 523 1438 523.500 1435 521L1433.500 522.500V518H1438L1436.500 519.500C1438.500 521 1441 520.500 1442 519Z" fill="#50b850"/>
<text class="s" x="1438" y="540">1</text><text class="s" x="1438" y="563">5</text><text class="s" x="1438" y="587">15</text><text class="s" x="1438" y="610">30</text><text class="s" x="1438" y="633">60</text>
<rect x="1428.500" y="646.500" width="24" height="21" fill="#fff"/><path d="M1428.500 667V646.500H1452" fill="none" stroke="#b8b8b8"/>
<text class="s" x="1439.500" y="657">日</text><text class="s" x="1439" y="680">周</text><text class="s" x="1439" y="703">月</text><text class="s" x="1438" y="726">N</text><text class="s" x="1439" y="750">多</text><text class="s" x="1439" y="773">季</text><text class="s" x="1439" y="795">年</text>
</svg>
</body>
</html>
